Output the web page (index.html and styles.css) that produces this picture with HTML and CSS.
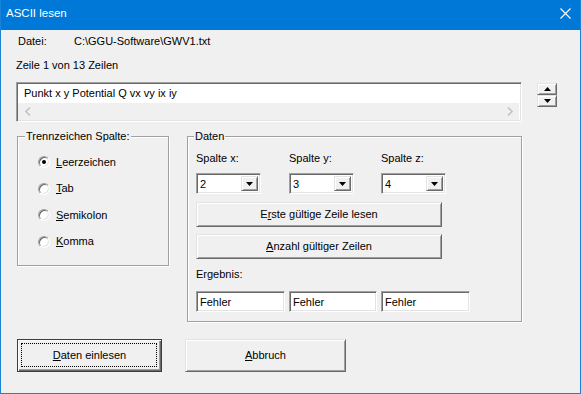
FILE: index.html
```html
<!DOCTYPE html>
<html lang="de">
<head>
<meta charset="utf-8">
<title>ASCII lesen</title>
<link rel="stylesheet" href="styles.css">
</head>
<body>
<div class="window">
  <div class="titlebar">
    <span class="title">ASCII lesen</span>
    <svg class="close" width="11" height="11" viewBox="0 0 11 11"><path d="M0.5 0.5 L10.5 10.5 M10.5 0.5 L0.5 10.5" stroke="#fff" stroke-width="1.1" fill="none"/></svg>
  </div>
  <div class="content">
    <div class="row-file"><span class="file-label">Datei:</span><span>C:\GGU-Software\GWV1.txt</span></div>
    <div class="row-line">Zeile 1 von 13 Zeilen</div>
    <div class="row-text">
      <div class="textbox">
        <div class="textline">Punkt x y Potential Q vx vy ix iy</div>
        <div class="hscroll">
          <svg width="6" height="9" viewBox="0 0 6 9"><path d="M5 0.5 L1 4.5 L5 8.5" stroke="#c4c4c4" stroke-width="1.6" fill="none"/></svg>
          <svg width="6" height="9" viewBox="0 0 6 9"><path d="M1 0.5 L5 4.5 L1 8.5" stroke="#c4c4c4" stroke-width="1.6" fill="none"/></svg>
        </div>
      </div>
      <div class="spinner">
        <div class="spin-btn"><svg width="7" height="4" viewBox="0 0 7 4"><path d="M0 4 L3.5 0 L7 4 Z" fill="#000"/></svg></div>
        <div class="spin-btn"><svg width="7" height="4" viewBox="0 0 7 4"><path d="M0 0 L7 0 L3.5 4 Z" fill="#000"/></svg></div>
      </div>
    </div>
    <div class="row-groups">
      <div class="group group-sep">
        <span class="legend">Trennzeichen Spalte:</span>
        <div class="radios">
          <div class="radio-item"><span class="radio checked"></span><span><u>L</u>eerzeichen</span></div>
          <div class="radio-item"><span class="radio"></span><span><u>T</u>ab</span></div>
          <div class="radio-item"><span class="radio"></span><span><u>S</u>emikolon</span></div>
          <div class="radio-item"><span class="radio"></span><span><u>K</u>omma</span></div>
        </div>
      </div>
      <div class="group group-data">
        <span class="legend">Daten</span>
        <div class="cols labels">
          <span>Spalte x:</span><span>Spalte y:</span><span>Spalte z:</span>
        </div>
        <div class="cols combos">
          <div class="combo"><span class="combo-val">2</span><span class="combo-btn"><svg width="7" height="4" viewBox="0 0 7 4"><path d="M0 0 L7 0 L3.5 4 Z" fill="#000"/></svg></span></div>
          <div class="combo"><span class="combo-val">3</span><span class="combo-btn"><svg width="7" height="4" viewBox="0 0 7 4"><path d="M0 0 L7 0 L3.5 4 Z" fill="#000"/></svg></span></div>
          <div class="combo"><span class="combo-val">4</span><span class="combo-btn"><svg width="7" height="4" viewBox="0 0 7 4"><path d="M0 0 L7 0 L3.5 4 Z" fill="#000"/></svg></span></div>
        </div>
        <div class="btn wide btn-first">E<u>r</u>ste gültige Zeile lesen</div>
        <div class="btn wide btn-second"><u>A</u>nzahl gültiger Zeilen</div>
        <div class="result-label">Ergebnis:</div>
        <div class="cols fields">
          <div class="field">Fehler</div>
          <div class="field">Fehler</div>
          <div class="field">Fehler</div>
        </div>
      </div>
    </div>
    <div class="row-buttons">
      <div class="btn btn-default"><u>D</u>aten einlesen</div>
      <div class="btn btn-cancel"><u>A</u>bbruch</div>
    </div>
  </div>
</div>
</body>
</html>
```
FILE: styles.css
```css
* { box-sizing: border-box; }
html, body { margin: 0; padding: 0; background: #f0f0f0; }
body {
  font-family: "Liberation Sans", Arial, sans-serif;
  font-size: 11px;
  line-height: 13px;
  color: #000;
}
.window {
  width: 581px;
  height: 394px;
  border: 1px solid #1883d7;
  border-top: none;
  background: #f0f0f0;
  overflow: hidden;
}
.titlebar {
  height: 30px;
  background: #0078d7;
  color: #fff;
  display: flex;
  align-items: center;
  justify-content: space-between;
  padding: 0 10px 4px 6px;
  margin: 0 -1px;
  font-size: 11.5px;
}
.title { line-height: 16px; }
.content { padding-left: 15px; }
.row-file { display: flex; margin-top: 5px; height: 13px; }
.file-label { width: 58px; padding-left: 2px; }
.row-line { margin-top: 11px; height: 13px; }
.row-text { display: flex; align-items: flex-start; margin-top: 10px; }
.textbox {
  width: 506px;
  height: 40px;
  border: 1px solid;
  border-color: #a0a0a0 #fff #fff #a0a0a0;
  box-shadow: inset 1px 1px 0 #696969, inset -1px -1px 0 #e3e3e3;
  background: #fff;
  padding: 1px 2px 1px 1px;
  display: flex;
  flex-direction: column;
}
.textline { height: 19px; padding: 3px 0 0 6px; }
.hscroll {
  flex: 1;
  background: #f0f0f0;
  display: flex;
  align-items: center;
  justify-content: space-between;
  padding: 0 6px 0 7px;
}
.spinner { margin-left: 15px; margin-top: 1px; width: 20px; display: flex; flex-direction: column; }
.spin-btn {
  height: 12px;
  background: #f0f0f0;
  border: 1px solid;
  border-color: #e3e3e3 #696969 #696969 #e3e3e3;
  box-shadow: inset 1px 1px 0 #fff, inset -1px -1px 0 #a0a0a0;
  display: flex;
  align-items: center;
  justify-content: center;
}
.row-groups { display: flex; align-items: flex-start; margin-top: 14px; }
.group {
  position: relative;
  border: 1px solid #a0a0a0;
  box-shadow: inset 1px 1px 0 #fff, 1px 1px 0 #fff;
}
.legend {
  position: absolute;
  top: -7px;
  left: 6px;
  padding: 0 1px;
  background: #f0f0f0;
  line-height: 13px;
}
.group-sep { margin-left: 1px; width: 152px; height: 130px; }
.group-sep .legend { left: 7px; }
.radios { display: flex; flex-direction: column; gap: 12.6px; padding: 18px 0 0 20px; }
.radio-item { display: flex; align-items: center; height: 14px; gap: 6px; }
.radio {
  position: relative;
  width: 12px;
  height: 12px;
  border-radius: 50%;
  border: 1px solid;
  border-color: #a0a0a0 #fff #fff #a0a0a0;
  background: #fff;
  box-shadow: inset 1px 1px 0 #696969, inset -1px -1px 0 #e3e3e3;
}
.radio.checked::after {
  content: "";
  position: absolute;
  left: 3px;
  top: 3px;
  width: 4px;
  height: 4px;
  border-radius: 50%;
  background: #000;
}
.group-data { margin-left: 18px; width: 335px; height: 186px; padding: 15px 0 0 8px; }
.cols { display: grid; grid-template-columns: 89px 88px 89px; column-gap: 4px; }
.labels { height: 13px; }
.combos { margin-top: 8px; }
.combo {
  width: 65px;
  height: 21px;
  border: 1px solid;
  border-color: #a0a0a0 #fff #fff #a0a0a0;
  box-shadow: inset 1px 1px 0 #696969, inset -1px -1px 0 #e3e3e3;
  background: #fff;
  display: flex;
  padding: 2px;
}
.combo-val { flex: 1; padding: 2px 0 0 1px; }
.combo-btn {
  width: 17px;
  background: #f0f0f0;
  border: 1px solid;
  border-color: #e3e3e3 #696969 #696969 #e3e3e3;
  box-shadow: inset 1px 1px 0 #fff, inset -1px -1px 0 #a0a0a0;
  display: flex;
  align-items: center;
  justify-content: center;
}
.btn {
  background: #f0f0f0;
  border: 1px solid;
  border-color: #e3e3e3 #696969 #696969 #e3e3e3;
  box-shadow: inset 1px 1px 0 #fff, inset -1px -1px 0 #a0a0a0;
  display: flex;
  align-items: center;
  justify-content: center;
}
.wide { width: 246px; height: 25px; }
.btn-first { margin-top: 8px; }
.btn-second { margin-top: 7px; height: 25px; }
.result-label { margin-top: 9px; height: 13px; }
.fields { margin-top: 10px; }
.field {
  height: 21px;
  border: 1px solid;
  border-color: #a0a0a0 #fff #fff #a0a0a0;
  box-shadow: inset 1px 1px 0 #696969, inset -1px -1px 0 #e3e3e3;
  background: #fff;
  padding: 4px 0 0 3px;
}
.row-buttons { display: flex; margin-top: 17px; padding-left: 1px; }
.btn-default {
  position: relative;
  width: 145px;
  height: 33px;
  border: 1px solid #3c3c3c;
  box-shadow: inset 1px 1px 0 #fff, inset -1px -1px 0 #696969, inset -2px -2px 0 #a0a0a0;
}
.btn-default::after {
  content: "";
  position: absolute;
  left: 3px; top: 3px; right: 4px; bottom: 4px;
  border: 1px dotted #000;
}
.btn-cancel { margin-left: 23px; width: 161px; height: 33px; }
```
